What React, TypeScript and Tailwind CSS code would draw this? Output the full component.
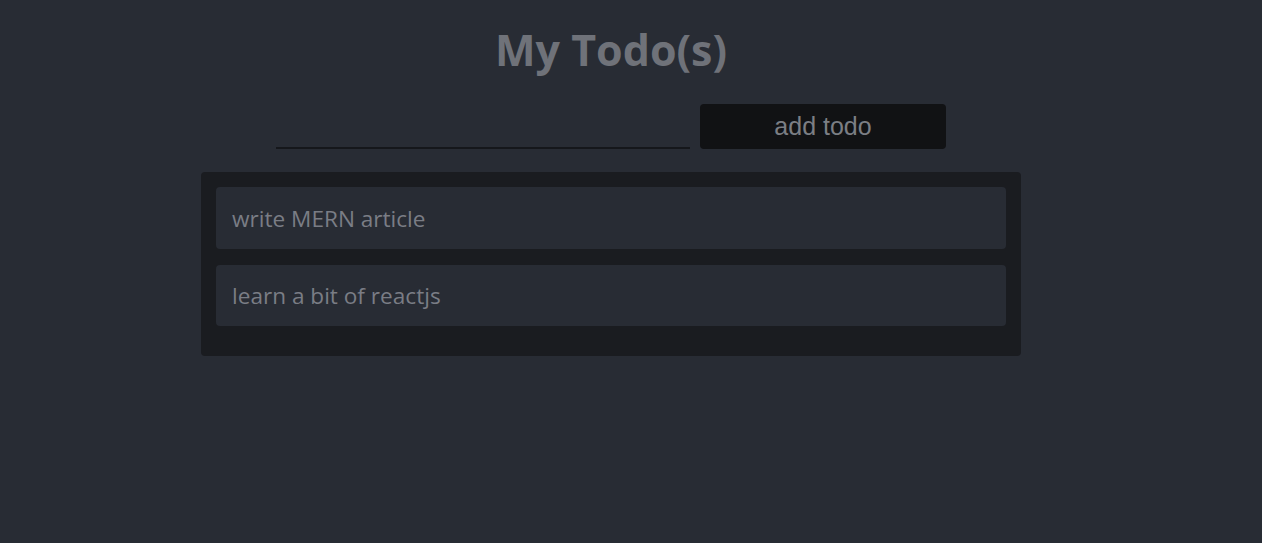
const todos = ['write MERN article', 'learn a bit of reactjs']

export default function App() {
  return (
    <div className="min-h-[543px] bg-[#282c34] font-['Open_Sans',sans-serif]">
      <div className="flex w-[1222px] flex-col items-center pt-[20px]">
        <h1 className="text-[43px] font-bold leading-[60px] text-[#6f7279]">My Todo(s)</h1>
        <div className="mt-[24px] flex gap-[10px]">
          <input
            type="text"
            className="h-[45px] w-[414px] border-b-2 border-[#15171b] bg-transparent px-2 text-[20px] text-[#7a7d85] outline-none"
          />
          <button className="h-[45px] w-[246px] rounded-[4px] bg-[#111214] font-['Liberation_Sans',sans-serif] text-[25px] text-[#7b7e84]">
            add todo
          </button>
        </div>
        <ul className="mt-[23px] flex w-[820px] flex-col gap-[16px] rounded-[4px] bg-[#1a1c20] px-[15px] pb-[30px] pt-[15px]">
          {todos.map((t) => (
            <li
              key={t}
              className="flex h-[61.5px] items-center rounded-[4px] bg-[#282c34] px-[16px] pt-[2px] text-[22.6px] text-[#7a7d85]"
            >
              {t}
            </li>
          ))}
        </ul>
      </div>
    </div>
  )
}
